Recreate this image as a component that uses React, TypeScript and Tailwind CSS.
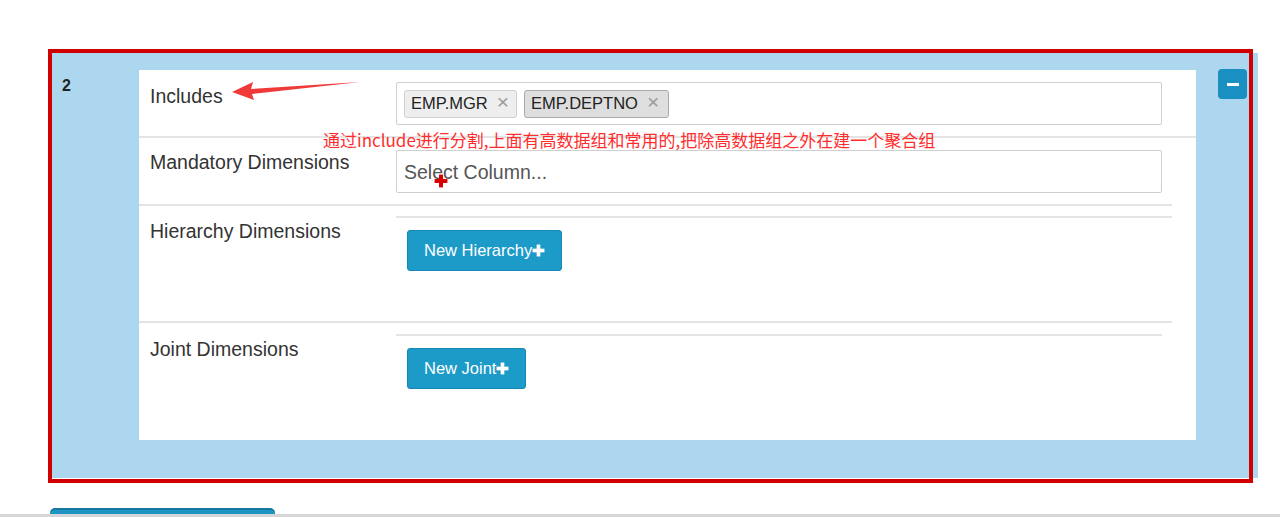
import React from 'react';

const font = { fontFamily: '"Liberation Sans", Arial, sans-serif' };

function Tag({ label, active }: { label: string; active?: boolean }) {
  return (
    <span
      className={
        'flex items-center gap-[9px] h-[28px] pl-[6px] pr-[7px] rounded-[3px] border text-[16.5px] text-[#222] ' +
        (active ? 'bg-[#dedede] border-[#a9a9a9] pr-[9px]' : 'bg-[#eeeeee] border-[#d0d0d0]')
      }
    >
      {label}
      <span className="text-[#9a9a9a] text-[21px] leading-none -mt-[5px]">×</span>
    </span>
  );
}

function PlusIcon({ size = 12, color = 'white' }: { size?: number; color?: string }) {
  return (
    <svg width={size} height={size} viewBox="0 0 12 12" className="block">
      <rect x="4.3" y="0.5" width="3.4" height="11" fill={color} />
      <rect x="0.5" y="4.3" width="11" height="3.4" fill={color} />
    </svg>
  );
}

function BlueButton({ label }: { label: string }) {
  return (
    <button className="flex items-center h-[41px] pl-[16px] pr-[16px] bg-[#1c9ac8] border border-[#1688b3] rounded-[3px] text-white text-[16.5px]">
      {label}
      <PlusIcon size={13} />
    </button>
  );
}

export default function App() {
  return (
    <div className="relative w-[1280px] h-[517px] overflow-hidden bg-white" style={font}>
      {/* group panel */}
      <div className="ml-[52px] mt-[53px] w-[1206px] h-[425px] bg-[#acd7ee] flex">
        <div className="w-[87px] pl-[10px] pt-[21px] text-[16px] font-bold text-[#222]">2</div>
        <div className="mt-[17px] w-[1057px] h-[370px] bg-white">
          {/* Includes */}
          <div className="flex h-[68px] border-b-2 border-[#e4e4e4]">
            <div className="w-[257px] pl-[11px] pt-[15px] text-[19.5px] leading-[22px] text-[#333]">Includes</div>
            <div className="pt-[12px]">
              <div className="w-[766px] h-[43px] border border-[#cfcfcf] rounded-[2px] flex items-center gap-[7px] px-[7px]">
                <Tag label="EMP.MGR" />
                <Tag label="EMP.DEPTNO" active />
              </div>
            </div>
          </div>
          {/* Mandatory */}
          <div className="flex h-[68px] mr-[24px] border-b-2 border-[#e4e4e4]">
            <div className="w-[257px] pl-[11px] pt-[13px] text-[19.5px] leading-[22px] text-[#333]">Mandatory Dimensions</div>
            <div className="pt-[12px]">
              <div className="w-[766px] h-[43px] border border-[#cfcfcf] rounded-[2px] flex items-center px-[7px] pt-[2px] text-[19.5px] text-[#555]">
                Select Column...
              </div>
            </div>
          </div>
          {/* Hierarchy */}
          <div className="flex h-[117px] mr-[24px] border-b-2 border-[#e4e4e4]">
            <div className="w-[257px] pl-[11px] pt-[14px] text-[19.5px] leading-[22px] text-[#333]">Hierarchy Dimensions</div>
            <div className="pt-[10px]">
              <div className="w-[776px] h-[2px] bg-[#e4e4e4]" />
              <div className="mt-[12px] ml-[11px]">
                <BlueButton label="New Hierarchy" />
              </div>
            </div>
          </div>
          {/* Joint */}
          <div className="flex">
            <div className="w-[257px] pl-[11px] pt-[15px] text-[19.5px] leading-[22px] text-[#333]">Joint Dimensions</div>
            <div className="pt-[11px]">
              <div className="w-[766px] h-[2px] bg-[#e4e4e4]" />
              <div className="mt-[12px] ml-[11px]">
                <BlueButton label="New Joint" />
              </div>
            </div>
          </div>
        </div>
        <div className="ml-[22px] mt-[16px]">
          <button className="w-[29px] h-[30px] rounded-[4px] bg-[#1a8fc2] flex items-center justify-center">
            <span className="block w-[12px] h-[3px] bg-white" />
          </button>
        </div>
      </div>

      {/* next add button, cut off */}
      <div className="ml-[50px] mt-[30px] w-[225px] h-[36px] rounded-t-[5px] bg-[#1c95c4] border-t-2 border-[#1677a0]" />

      {/* annotation overlays */}
      <div className="absolute left-[48px] top-[49px] w-[1205px] h-[434px] border-[4px] border-[#d10000] pointer-events-none" />
      <svg className="absolute left-[228px] top-[78px]" width="140" height="24" viewBox="0 0 140 24">
        <polygon points="4,14 25,4 23,11 132,4 24,16 26,22" fill="#f03a3a" />
      </svg>
      <div
        className="absolute left-[323px] top-[129px] text-[17px] leading-[22px] text-[#ff2d2d] whitespace-nowrap"
        style={{ fontFamily: '"Noto Sans CJK SC", "Liberation Sans", sans-serif' }}
      >
        通过include进行分割,上面有高数据组和常用的,把除高数据组之外在建一个聚合组
      </div>
      <div className="absolute left-[434px] top-[174px]">
        <PlusIcon size={14} color="#d80000" />
      </div>

      {/* scrollbar edge */}
      <div className="absolute left-0 bottom-0 w-full h-[3px] bg-[#d6d6d6]" />
    </div>
  );
}
